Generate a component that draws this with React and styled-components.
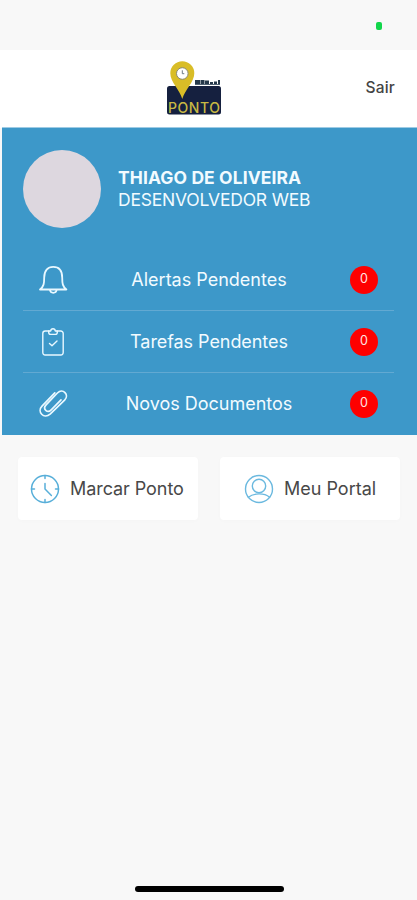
import React from "react";
import styled, { createGlobalStyle } from "styled-components";

const GlobalStyle = createGlobalStyle`
    * {
        box-sizing: border-box;
    }

    body {
        margin: 0;
        background: #f8f8f8;
        font-family: Inter, "Liberation Sans", sans-serif;
    }
`

const Screen = styled.div`
    display: flex;
    flex-direction: column;
    width: 100%;
    height: 900px;
    overflow: hidden;
    background: #f8f8f8;
`

const StatusBar = styled.div`
    display: flex;
    justify-content: flex-end;
    height: 50px;
    flex-shrink: 0;
    padding: 22px 35px 0 0;
`

const Battery = styled.div`
    width: 6px;
    height: 8px;
    border-radius: 2px;
    background: #12d64b;
`

const Header = styled.header`
    display: grid;
    grid-template-columns: 1fr 54px 1fr;
    align-items: center;
    height: 78px;
    flex-shrink: 0;
    background: #fff;
`

const LogoSlot = styled.div`
    grid-column: 2;
    height: 56px;
    margin-left: -15px;
`

const Logout = styled.button`
    justify-self: end;
    padding: 0 0 2px;
    border: 0;
    margin-right: 22px;
    background: none;
    color: #444;
    font: 500 15.5px/20px Inter, sans-serif;
    letter-spacing: 0.2px;
`

const Panel = styled.section`
    height: 307px;
    flex-shrink: 0;
    margin-left: 2px;
    padding: 22px 23px 0 21px;
    background: #3d98c9;
    box-shadow: 0 -1px 0 #9ecbe4;
    color: #f2fbff;
`

const Profile = styled.div`
    display: flex;
    align-items: flex-start;
    gap: 17px;
    height: 99px;
`

const Avatar = styled.div`
    width: 78px;
    height: 78px;
    border-radius: 50%;
    background: #ddd7df;
`

const Name = styled.div`
    margin-top: 17px;
    font-size: 17.5px;
    font-weight: 700;
    line-height: 22px;
    letter-spacing: 0.09px;
    white-space: nowrap;
`

const Role = styled(Name)`
    margin-top: 0;
    font-weight: 400;
    letter-spacing: -0.2px;
`

const Row = styled.div`
    display: grid;
    grid-template-columns: 60px 1fr 60px;
    align-items: center;
    justify-items: center;
    height: ${({ $last }) => ($last ? "61px" : "62px")};
    border-bottom: ${({ $last }) => ($last ? "0" : "1px solid #62a9d2")};
`

const RowLabel = styled.div`
    margin: 1px 0 0 1px;
    font-size: 18px;
    line-height: 24px;
    letter-spacing: ${({ $spacing }) => $spacing};
    white-space: nowrap;
`

const Badge = styled.div`
    width: 28px;
    height: 28px;
    border-radius: 50%;
    background: #fe0000;
    color: #ffe4e4;
    font-size: 12.5px;
    line-height: 25px;
    text-align: center;
`

const Actions = styled.div`
    display: flex;
    gap: 22px;
    padding: 22px 17px 0 18px;
`

const ActionCard = styled.button`
    display: flex;
    align-items: center;
    gap: 10px;
    width: 180px;
    height: 63px;
    padding: 0 0 0 ${({ $inset }) => $inset};
    border: 0;
    border-radius: 4px;
    background: #fff;
    box-shadow: 0 1px 5px rgba(0, 0, 0, 0.015);
    color: #484848;
    font: 400 18px/24px Inter, sans-serif;
    letter-spacing: ${({ $spacing }) => $spacing};
    white-space: nowrap;
`

const HomeIndicator = styled.div`
    width: 149px;
    height: 6px;
    flex-shrink: 0;
    margin: auto auto 8px 135px;
    border-radius: 3px;
    background: #000;
`

const Icon = styled.svg`
    display: block;
    flex-shrink: 0;
    fill: none;
    stroke: ${({ $color }) => $color || "#e9f8ff"};
    stroke-width: ${({ $weight }) => $weight || 1.8};
    stroke-linecap: round;
    stroke-linejoin: round;
`

const Logo = () => (
    <svg width="54" height="54" viewBox="0 0 54 54">
        <rect x="0" y="25" width="54" height="28.5" rx="2.5" fill="#15203f" />
        <path d="M28 19h5v4h-5zM33.5 19h4v4h-4zM38 19.5h4v3.5h-4zM43 21h3v2h-3zM47 20.5h3v2.5h-3zM51 19h2v4h-2z" fill="#26394b" />
        <path d="M28 23.5h25" stroke="#526374" />
        <path d="M15.3 38C13 29 3.3 21 3.3 12.2a12 12 0 0 1 24 0C27.3 21 17.6 29 15.3 38z" fill="#d9bd27" />
        <circle cx="15.3" cy="12.5" r="5.8" fill="#fff" stroke="#898976" strokeWidth="1" />
        <path d="M15.3 9.3v3.4h2" stroke="#6d7986" fill="none" />
        <text x="1" y="51.5" textLength="52" fill="#c8b943" fontFamily="Inter" fontSize="14" fontWeight="500">PONTO</text>
    </svg>
)

const BellIcon = () => (
    <Icon width="30" height="30" viewBox="0 0 30 30">
        <path d="M2 24.5c3.8-3 4.2-6 4.2-12C6.2 5.4 9.7 1.9 15.2 1.9s9 3.5 9 10.6c0 6 .4 9 4.2 12z" />
        <path d="M12 25c.5 3.7 6.1 3.7 6.6 0" />
    </Icon>
)

const ClipboardIcon = () => (
    <Icon width="30" height="30" viewBox="0 0 30 30" $weight={1.4}>
        <path d="M11 4H7.2a2.4 2.4 0 0 0-2.4 2.4v19A2.4 2.4 0 0 0 7.2 28h15.6a2.4 2.4 0 0 0 2.4-2.6v-19A2.4 2.4 0 0 0 22.8 4H19" />
        <path d="M10.7 4h2c.3-3 4.3-3 4.6 0h2v1.2c0 1.4-.8 2.2-2.2 2.2h-4.2c-1.4 0-2.2-.8-2.2-2.2z" />
        <path d="M11.5 16.5l2.5 2.3 5-4.7" />
    </Icon>
)

const ClipIcon = () => (
    <Icon width="30" height="30" viewBox="0 0 30 30" $weight={1.7}>
        <path d="M16.8 3.8L4 17.2c-5.3 5.5 1.8 13.4 8.1 8L26.6 11.1c5.2-5.4-1.8-12.3-7.2-7.1L8.1 15.8c-3.9 4.1 1.3 8.9 5.1 5.1l9.8-10" />
    </Icon>
)

const ClockIcon = () => (
    <Icon width="30" height="30" viewBox="0 0 30 30" $color="#58afd9" $weight={1.5}>
        <circle cx="15" cy="15" r="13.5" />
        <path d="M15 1.5v3M15 25.5v3M1.5 15h3M25.5 15h3M15 9.5V15l6.4 6.5" />
    </Icon>
)

const PortalIcon = () => (
    <Icon width="30" height="30" viewBox="0 0 30 30" $color="#6bb9df" $weight={1.4}>
        <circle cx="15" cy="15" r="13.5" />
        <circle cx="15" cy="12" r="6.7" />
        <path d="M4.4 23.2C9.6 18.8 20.4 18.8 25.6 23.2" />
    </Icon>
)

const items = [
    { label: "Alertas Pendentes", icon: <BellIcon />, count: 0, spacing: "0" },
    { label: "Tarefas Pendentes", icon: <ClipboardIcon />, count: 0, spacing: "-0.06px" },
    { label: "Novos Documentos", icon: <ClipIcon />, count: 0, spacing: "0" },
]

const App = () => {
    return (
        <>
        <GlobalStyle />
        <Screen>
            <StatusBar>
                <Battery />
            </StatusBar>
            <Header>
                <LogoSlot><Logo /></LogoSlot>
                <Logout>Sair</Logout>
            </Header>
            <Panel>
                <Profile>
                    <Avatar />
                    <div>
                        <Name>THIAGO DE OLIVEIRA</Name>
                        <Role>DESENVOLVEDOR WEB</Role>
                    </div>
                </Profile>
                {
                    items.map((item, index) => (
                        <Row key={item.label} $last={index === items.length - 1}>
                            {item.icon}
                            <RowLabel $spacing={item.spacing}>{item.label}</RowLabel>
                            <Badge>{item.count}</Badge>
                        </Row>
                    ))
                }
            </Panel>
            <Actions>
                <ActionCard $inset="12px" $spacing="-0.07px">
                    <ClockIcon />
                    Marcar Ponto
                </ActionCard>
                <ActionCard $inset="24px" $spacing="0">
                    <PortalIcon />
                    Meu Portal
                </ActionCard>
            </Actions>
            <HomeIndicator />
        </Screen>
        </>
    )
}

export default App
